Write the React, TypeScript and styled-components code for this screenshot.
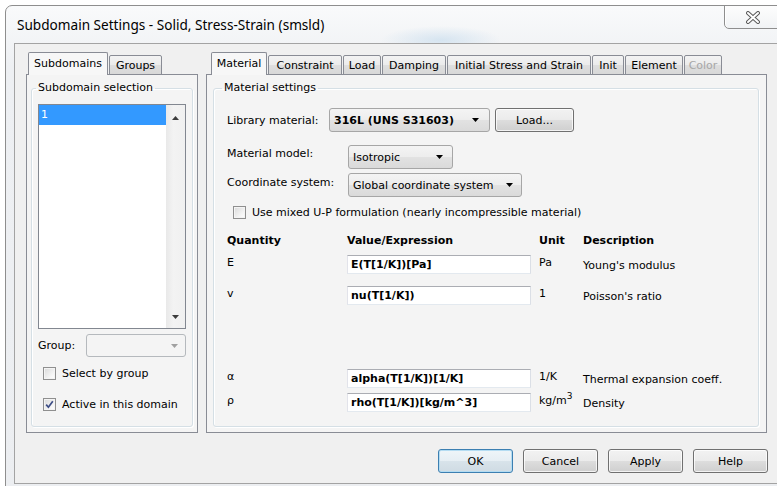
import React from "react";
import styled, { createGlobalStyle, css } from "styled-components";

const UI_FONT = `"DejaVu Sans", "Liberation Sans", sans-serif`;
const TITLE_FONT = `"Noto Sans", "Open Sans", sans-serif`;

const Global = createGlobalStyle`
  html, body {
    margin: 0;
    padding: 0;
    background: #ffffff;
  }
  body {
    width: 777px;
    height: 486px;
    overflow: hidden;
    font-family: ${UI_FONT};
    font-size: 11px;
    color: #000;
  }
`;

/* ---------- window frame ---------- */

const Window = styled.div`
  box-sizing: border-box;
  margin: 5px 0 0 5px;
  width: 790px;
  height: 500px;
  border: 1px solid #8e8e8e;
  border-radius: 7px 7px 0 0;
  background:
    radial-gradient(ellipse 60px 14px at 435px 34px, rgba(190, 215, 235, 0.55), rgba(190, 215, 235, 0) 100%),
    linear-gradient(#f9fafb, #eef0f3 60px, #eceef1);
  display: flex;
  flex-direction: column;
  overflow: hidden;
`;

const TitleBar = styled.div`
  height: 37px;
  display: flex;
  align-items: flex-start;
`;

const TitleText = styled.div`
  font-family: ${TITLE_FONT};
  font-size: 13.6px;
  line-height: 18px;
  padding: 10px 0 0 11px;
  color: #000;
  white-space: nowrap;
`;

const CloseButton = styled.div`
  box-sizing: border-box;
  margin: -1px 0 0 auto;
  width: 70px;
  height: 24px;
  border: 1px solid #8e8e8e;
  border-radius: 0 0 5px 5px;
  background: linear-gradient(#fdfdfd, #f1f3f5);
  box-shadow: inset 1px 0 0 #ffffff;
  display: flex;
  align-items: center;
  padding: 1px 0 0 20px;
`;

const CloseGlyph = () => (
  <svg width="16" height="13" viewBox="0 0 16 13">
    <path d="M3 2 L13 11 M13 2 L3 11" stroke="#5b5b5b" strokeWidth="4" strokeLinecap="round" />
    <path d="M3 2 L13 11 M13 2 L3 11" stroke="#ffffff" strokeWidth="2" strokeLinecap="round" />
  </svg>
);

const Client = styled.div`
  box-sizing: border-box;
  margin-left: 8px;
  height: 441px;
  border: 1px solid #a3a3a3;
  background: #f0f0f0;
  padding: 8px 0 0 11px;
  display: flex;
  flex-direction: column;
`;

const TabsRow = styled.div`
  display: flex;
  gap: 8px;
  width: 741px;
`;

/* ---------- tab controls ---------- */

const TabControl = styled.div<{ $w: number }>`
  width: ${(p) => p.$w}px;
  display: flex;
  flex-direction: column;
`;

const TabStrip = styled.div<{ $indent: number }>`
  display: flex;
  align-items: flex-end;
  height: 23px;
  padding-left: ${(p) => p.$indent}px;
  margin-bottom: -1px;
  position: relative;
  z-index: 1;
`;

const Tab = styled.div<{ $w: number; $active?: boolean; $disabled?: boolean }>`
  box-sizing: border-box;
  width: ${(p) => p.$w}px;
  height: 20px;
  border: 1px solid #898c95;
  border-radius: 2px 2px 0 0;
  margin-right: 1px;
  display: flex;
  align-items: center;
  justify-content: center;
  white-space: nowrap;
  padding-top: 1px;
  color: ${(p) => (p.$disabled ? "#a7a7a7" : "#000")};
  background: linear-gradient(#f3f3f3, #ebebeb 50%, #dedede 51%, #d8d8d8);
  ${(p) =>
    p.$active &&
    css`
      height: 23px;
      border-bottom: none;
      padding-top: 0;
      padding-bottom: 1px;
      background: #f7f7f7;
    `}
`;

const Panel = styled.div<{ $pad: string }>`
  box-sizing: border-box;
  height: 359px;
  border: 1px solid #898c95;
  background: #f4f4f4;
  padding: ${(p) => p.$pad};
  display: flex;
  flex-direction: column;
`;

const GroupBox = styled.fieldset<{ $pad: string }>`
  flex: 1;
  margin: 0;
  min-width: 0;
  border: 1px solid #d5dfe5;
  border-radius: 3px;
  box-shadow: 1px 1px 0 #ffffff, inset 1px 1px 0 #ffffff;
  padding: ${(p) => p.$pad};
  display: flex;
  flex-direction: column;
`;

const Legend = styled.legend<{ $shift: number }>`
  font-size: 11px;
  line-height: 14px;
  padding: 0 2px;
  margin-left: ${(p) => p.$shift}px;
`;

/* ---------- left: subdomain list ---------- */

const ListBox = styled.div`
  box-sizing: border-box;
  width: 148px;
  height: 225px;
  border: 1px solid #828790;
  background: #ffffff;
  display: flex;
`;

const ListItems = styled.div`
  flex: 1;
`;

const ListItem = styled.div<{ $selected?: boolean }>`
  height: 20px;
  line-height: 20px;
  padding-left: 2px;
  background: ${(p) => (p.$selected ? "#3399ff" : "transparent")};
  color: ${(p) => (p.$selected ? "#ffffff" : "#000")};
`;

const ScrollTrack = styled.div`
  width: 19px;
  background: linear-gradient(to right, #e9e9e9, #f3f3f3 40%, #f0f0f0);
  display: flex;
  flex-direction: column;
  align-items: center;
  justify-content: space-between;
  padding: 11px 0 9px;
`;

const Triangle = ({ up, color = "#000" }: { up?: boolean; color?: string }) => (
  <svg width="7" height="4" viewBox="0 0 7 4">
    <path d={up ? "M0 4 H7 L3.5 0 Z" : "M0 0 H7 L3.5 4 Z"} fill={color} />
  </svg>
);

const GroupRow = styled.div`
  display: flex;
  align-items: center;
  justify-content: space-between;
  width: 148px;
  margin-top: 5px;
`;

const CheckRow = styled.label<{ $top: number; $indent: number }>`
  display: flex;
  align-items: center;
  gap: 6px;
  margin-top: ${(p) => p.$top}px;
  padding-left: ${(p) => p.$indent}px;
  white-space: nowrap;
`;

const Box = styled.span`
  box-sizing: border-box;
  width: 13px;
  height: 13px;
  border: 1px solid #8f8f8f;
  background: linear-gradient(135deg, #d9d9d9, #f6f6f6 70%, #ffffff);
  box-shadow: inset 0 0 0 1px #f4f4f4;
  display: flex;
  align-items: center;
  justify-content: center;
`;

const CheckBox = ({ checked }: { checked?: boolean }) => (
  <Box>
    {checked && (
      <svg width="9" height="9" viewBox="0 0 9 9">
        <path d="M1.2 4.6 L3.4 7.2 L7.8 1.2" stroke="#3d4d86" strokeWidth="1.7" fill="none" />
      </svg>
    )}
  </Box>
);

/* ---------- combos and buttons ---------- */

const Combo = styled.div<{ $w: number; $h: number; $bold?: boolean; $disabled?: boolean; $pad: number }>`
  box-sizing: border-box;
  width: ${(p) => p.$w}px;
  height: ${(p) => p.$h}px;
  display: flex;
  align-items: center;
  justify-content: space-between;
  padding: 0 ${(p) => p.$pad}px 0 4px;
  border: 1px solid #a6a6a6;
  border-radius: 3px;
  font-weight: ${(p) => (p.$bold ? 700 : 400)};
  white-space: nowrap;
  background: linear-gradient(#f4f4f4, #ededed 50%, #e2e2e2 51%, #dadada);
  ${(p) =>
    p.$disabled &&
    css`
      border-color: #b5b9bd;
      background: #f4f4f4;
    `}
`;

const Button = styled.div<{ $w: number; $h: number; $default?: boolean; $gapLeft?: number }>`
  box-sizing: border-box;
  width: ${(p) => p.$w}px;
  height: ${(p) => p.$h}px;
  margin-left: ${(p) => p.$gapLeft ?? 0}px;
  display: flex;
  align-items: center;
  justify-content: center;
  border: 1px solid #707070;
  border-radius: 3px;
  background: linear-gradient(#f2f2f2, #ebebeb 50%, #dddddd 51%, #cfcfcf);
  box-shadow: inset 0 0 0 1px rgba(255, 255, 255, 0.75);
  ${(p) =>
    p.$default &&
    css`
      border-color: #3c7fb1;
      box-shadow: inset 0 0 0 1px #b4dcf2;
      background: linear-gradient(#eef5f9, #e6eef3 50%, #d8e3ea 51%, #cfdbe3);
    `}
`;

/* ---------- right: material settings ---------- */

const LibraryRow = styled.div`
  display: flex;
  align-items: center;
  height: 24px;
`;

const LibraryLabel = styled.span`
  width: 102px;
  white-space: nowrap;
`;

const FormRow = styled.div<{ $top: number }>`
  display: grid;
  grid-template-columns: 121px auto;
  justify-content: start;
  align-items: start;
  margin-top: ${(p) => p.$top}px;
`;

const FormLabel = styled.span<{ $drop: number }>`
  padding-top: ${(p) => p.$drop}px;
  line-height: 14px;
  white-space: nowrap;
`;

const ParamRow = styled.div<{ $top: number }>`
  display: grid;
  grid-template-columns: 120px 192px 44px 1fr;
  margin-top: ${(p) => p.$top}px;
`;

const HeadCell = styled.span`
  font-weight: 700;
  line-height: 14px;
  white-space: nowrap;
`;

const TopCell = styled.span`
  align-self: start;
  padding-top: 1px;
  line-height: 13px;
  white-space: nowrap;
`;

const MidCell = styled.span`
  align-self: center;
  padding-top: 1px;
  white-space: nowrap;
`;

const ValueInput = styled.div`
  box-sizing: border-box;
  width: 184px;
  height: 19px;
  border: 1px solid #abadb3;
  border-color: #abadb3 #dbdfe6 #e3e9ef #e2e3ea;
  background: #ffffff;
  font-weight: 700;
  padding: 0 3px;
  line-height: 17px;
  white-space: nowrap;
`;

const ButtonRow = styled.div`
  width: 742px;
  display: flex;
  justify-content: flex-end;
  gap: 10px;
  margin-top: 16px;
`;

const rightTabs: { label: string; w: number; active?: boolean; disabled?: boolean }[] = [
  { label: "Material", w: 56, active: true },
  { label: "Constraint", w: 74 },
  { label: "Load", w: 38 },
  { label: "Damping", w: 64 },
  { label: "Initial Stress and Strain", w: 144 },
  { label: "Init", w: 32 },
  { label: "Element", w: 58 },
  { label: "Color", w: 38, disabled: true },
];

type Param = { sym: string; value: string; unit: React.ReactNode; desc: string; top: number };

const params: Param[] = [
  { sym: "E", value: "E(T[1/K])[Pa]", unit: "Pa", desc: "Young's modulus", top: 7 },
  { sym: "v", value: "nu(T[1/K])", unit: "1", desc: "Poisson's ratio", top: 12 },
  { sym: "α", value: "alpha(T[1/K])[1/K]", unit: "1/K", desc: "Thermal expansion coeff.", top: 64 },
  {
    sym: "ρ",
    value: "rho(T[1/K])[kg/m^3]",
    unit: (
      <>
        kg/m<sup style={{ fontSize: "9px", lineHeight: 0 }}>3</sup>
      </>
    ),
    desc: "Density",
    top: 5,
  },
];

export default function App() {
  return (
    <>
      <Global />
      <Window>
        <TitleBar>
          <TitleText>Subdomain Settings - Solid, Stress-Strain (smsld)</TitleText>
          <CloseButton>
            <CloseGlyph />
          </CloseButton>
        </TitleBar>
        <Client>
          <TabsRow>
            <TabControl $w={172}>
              <TabStrip $indent={2}>
                <Tab $w={80} $active>
                  Subdomains
                </Tab>
                <Tab $w={53}>Groups</Tab>
              </TabStrip>
              <Panel $pad="6px 4px 5px 4px">
                <GroupBox $pad="9px 7px 0 6px">
                  <Legend $shift={-2}>Subdomain selection</Legend>
                  <ListBox>
                    <ListItems>
                      <ListItem $selected>1</ListItem>
                    </ListItems>
                    <ScrollTrack>
                      <Triangle up color="#3c3c3c" />
                      <Triangle color="#3c3c3c" />
                    </ScrollTrack>
                  </ListBox>
                  <GroupRow>
                    <span>Group:</span>
                    <Combo $w={100} $h={23} $pad={7} $disabled>
                      <span />
                      <Triangle color="#a0a0a0" />
                    </Combo>
                  </GroupRow>
                  <CheckRow $top={10} $indent={5}>
                    <CheckBox />
                    Select by group
                  </CheckRow>
                  <CheckRow $top={18} $indent={5}>
                    <CheckBox checked />
                    Active in this domain
                  </CheckRow>
                </GroupBox>
              </Panel>
            </TabControl>

            <TabControl $w={561}>
              <TabStrip $indent={5}>
                {rightTabs.map((t) => (
                  <Tab key={t.label} $w={t.w} $active={t.active} $disabled={t.disabled}>
                    {t.label}
                  </Tab>
                ))}
              </TabStrip>
              <Panel $pad="6px 7px 5px 6px">
                <GroupBox $pad="13px 8px 0 13px">
                  <Legend $shift={-5}>Material settings</Legend>
                  <LibraryRow>
                    <LibraryLabel>Library material:</LibraryLabel>
                    <Combo $w={161} $h={24} $pad={10} $bold>
                      <span>316L (UNS S31603)</span>
                      <Triangle />
                    </Combo>
                    <Button $w={79} $h={24} $gapLeft={5}>
                      Load...
                    </Button>
                  </LibraryRow>
                  <FormRow $top={13}>
                    <FormLabel $drop={2}>Material model:</FormLabel>
                    <Combo $w={105} $h={24} $pad={9}>
                      <span>Isotropic</span>
                      <Triangle />
                    </Combo>
                  </FormRow>
                  <FormRow $top={4}>
                    <FormLabel $drop={3}>Coordinate system:</FormLabel>
                    <Combo $w={174} $h={24} $pad={8}>
                      <span>Global coordinate system</span>
                      <Triangle />
                    </Combo>
                  </FormRow>
                  <CheckRow $top={9} $indent={6}>
                    <CheckBox />
                    Use mixed U-P formulation (nearly incompressible material)
                  </CheckRow>
                  <ParamRow $top={15}>
                    <HeadCell>Quantity</HeadCell>
                    <HeadCell>Value/Expression</HeadCell>
                    <HeadCell>Unit</HeadCell>
                    <HeadCell>Description</HeadCell>
                  </ParamRow>
                  {params.map((p) => (
                    <ParamRow key={p.sym} $top={p.top}>
                      <TopCell>{p.sym}</TopCell>
                      <ValueInput>{p.value}</ValueInput>
                      <TopCell>{p.unit}</TopCell>
                      <MidCell>{p.desc}</MidCell>
                    </ParamRow>
                  ))}
                </GroupBox>
              </Panel>
            </TabControl>
          </TabsRow>
          <ButtonRow>
            <Button $w={75} $h={24} $default>
              OK
            </Button>
            <Button $w={75} $h={24}>
              Cancel
            </Button>
            <Button $w={75} $h={24}>
              Apply
            </Button>
            <Button $w={75} $h={24}>
              Help
            </Button>
          </ButtonRow>
        </Client>
      </Window>
    </>
  );
}
